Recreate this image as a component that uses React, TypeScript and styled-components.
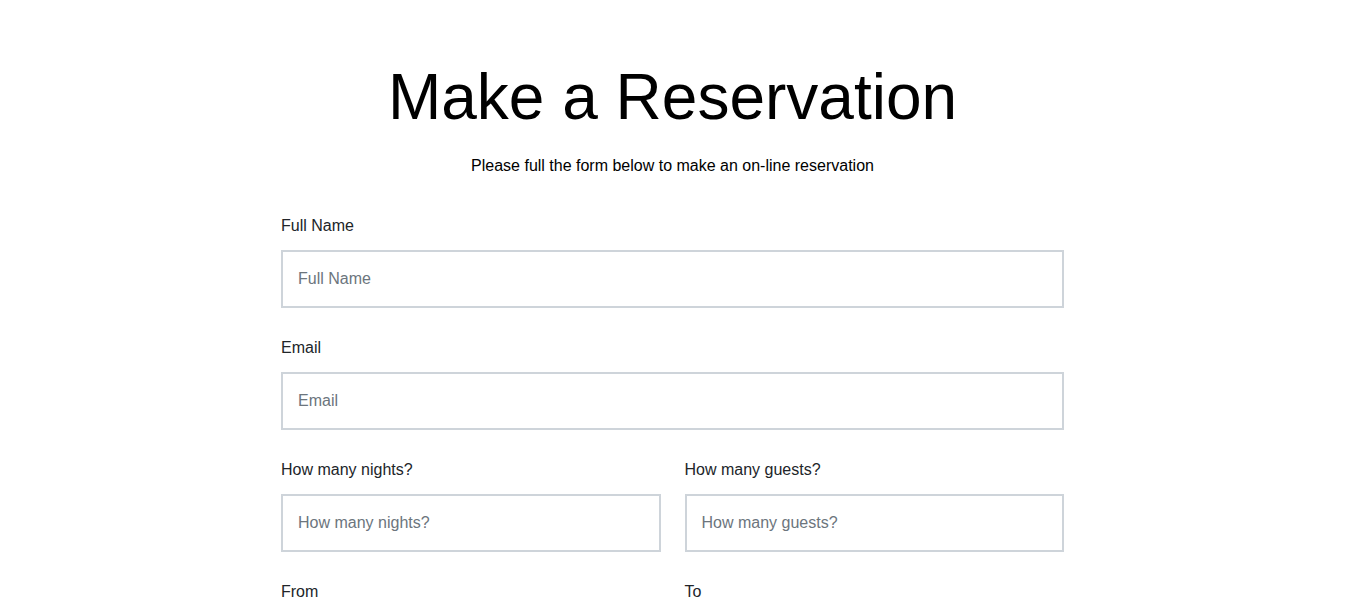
import React from 'react'
import styled, { createGlobalStyle } from 'styled-components'

const GlobalStyle = createGlobalStyle`
  * { box-sizing: border-box; }
  body {
    margin: 0;
    background: #fff;
    font-family: "Liberation Sans", Arial, sans-serif;
    color: #212529;
  }
`

const Page = styled.main`
  display: flex;
  flex-direction: column;
  align-items: center;
  padding: 59px 0 40px;
`

const Title = styled.h1`
  margin: 0;
  font-size: 64px;
  font-weight: 400;
  line-height: 1.2;
  color: #000;
`

const Subtitle = styled.p`
  margin: 18px 0 36px;
  font-size: 16px;
  line-height: 24px;
  color: #000;
`

const Form = styled.form`
  width: 783px;
  display: flex;
  flex-direction: column;
  gap: 28px;
`

const Row = styled.div`
  display: grid;
  grid-template-columns: 1fr 1fr;
  column-gap: 24px;
`

const Field = styled.div`
  display: flex;
  flex-direction: column;
  gap: 12px;
`

const Label = styled.label`
  font-size: 16px;
  line-height: 24px;
  color: #212529;
`

const Input = styled.input`
  height: 58px;
  width: 100%;
  padding: 0 15px;
  border: 2px solid #ced4da;
  border-radius: 0;
  font-family: "Liberation Sans", Arial, sans-serif;
  font-size: 16px;
  color: #212529;
  background: #fff;
  outline: none;

  &::placeholder {
    color: #6c757d;
  }
`

const Submit = styled.button`
  align-self: flex-start;
  padding: 14px 32px;
  border: none;
  background: #212529;
  color: #fff;
  font-family: "Liberation Sans", Arial, sans-serif;
  font-size: 16px;
`

function FormField({ id, label, type = 'text' }: { id: string; label: string; type?: string }) {
  return (
    <Field>
      <Label htmlFor={id}>{label}</Label>
      <Input id={id} type={type} placeholder={type === 'date' ? undefined : label} />
    </Field>
  )
}

export default function App() {
  return (
    <>
      <GlobalStyle />
      <Page>
        <Title>Make a Reservation</Title>
        <Subtitle>Please full the form below to make an on-line reservation</Subtitle>
        <Form onSubmit={(e) => e.preventDefault()}>
          <FormField id="name" label="Full Name" />
          <FormField id="email" label="Email" type="email" />
          <Row>
            <FormField id="nights" label="How many nights?" />
            <FormField id="guests" label="How many guests?" />
          </Row>
          <Row>
            <FormField id="from" label="From" type="date" />
            <FormField id="to" label="To" type="date" />
          </Row>
          <Submit type="submit">Reserve</Submit>
        </Form>
      </Page>
    </>
  )
}
